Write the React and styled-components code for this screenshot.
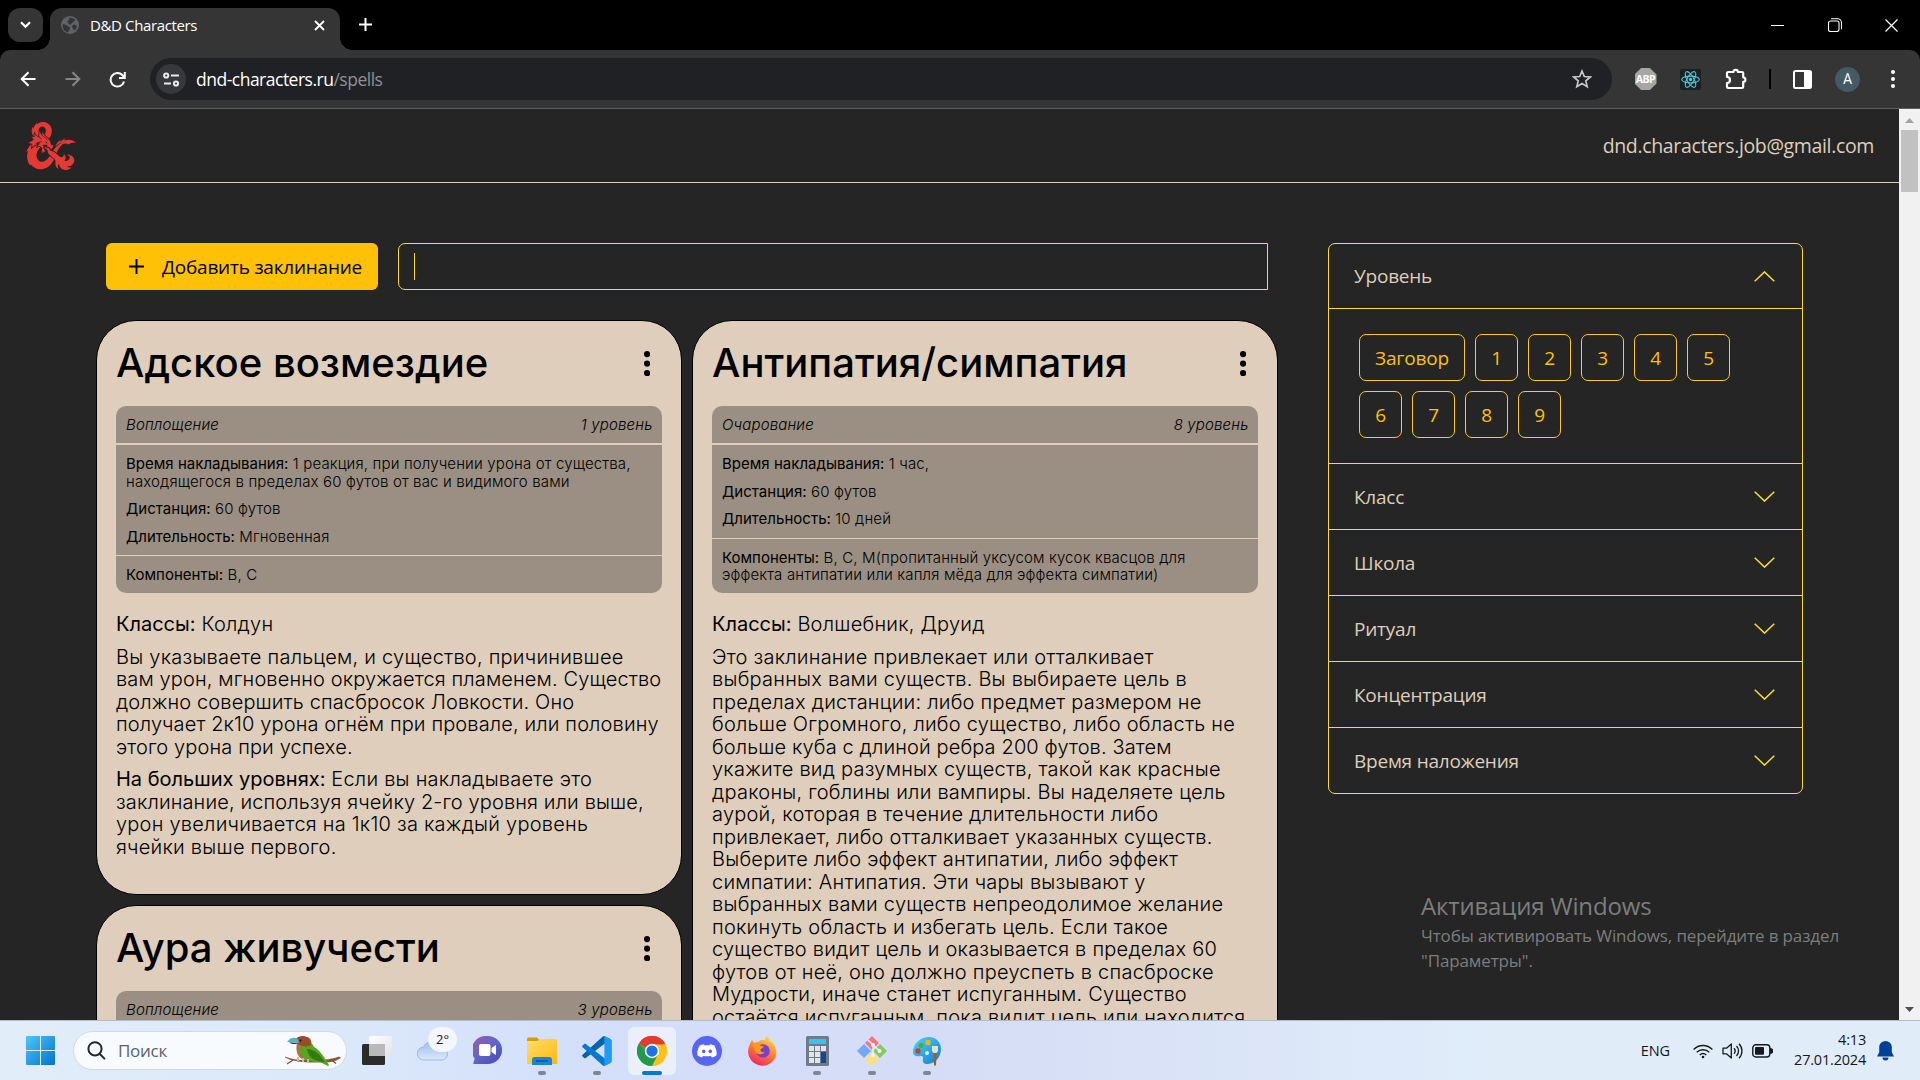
import React from "react";
import styled, { createGlobalStyle, css } from "styled-components";
import { FaDAndD } from "react-icons/fa";

const ui = css`font-family: "Open Sans", "Noto Sans", sans-serif;`;
const inter = css`font-family: Inter, "Liberation Sans", sans-serif;`;

const GlobalStyle = createGlobalStyle`
  * { box-sizing: border-box; }
  body { margin: 0; background: #252525; overflow: hidden; }
  svg { display: block; flex: none; }
`;

const Screen = styled.div`
  width: 1920px;
  height: 1080px;
  display: flex;
  flex-direction: column;
  overflow: hidden;
  background: #000;
  ${ui}
`;

/* ---------- Browser chrome ---------- */

const TabStrip = styled.div`
  height: 50px;
  flex: none;
  display: flex;
  align-items: flex-start;
  background: #000;
  padding: 8px 0 0 8px;
`;

const TabSearch = styled.div`
  width: 35px;
  height: 34px;
  border-radius: 12px;
  background: #353535;
  display: grid;
  place-items: center;
`;

const Tab = styled.div`
  position: relative;
  width: 290px;
  height: 42px;
  margin-left: 7px;
  padding: 0 15px 8px 11px;
  display: flex;
  align-items: center;
  background: #353535;
  border-radius: 12px 12px 0 0;
  &::before,
  &::after {
    content: "";
    position: absolute;
    bottom: 0;
    width: 12px;
    height: 12px;
  }
  &::before {
    left: -12px;
    background: radial-gradient(circle at 0 0, transparent 11.5px, #353535 12px);
  }
  &::after {
    right: -12px;
    background: radial-gradient(circle at 100% 0, transparent 11.5px, #353535 12px);
  }
`;

const TabTitle = styled.span`
  flex: 1;
  margin-left: 11px;
  font-size: 15px;
  letter-spacing: -0.37px;
  color: #fff;
`;

const NewTab = styled.div`
  margin: 9px auto 0 18px;
`;

const WindowButton = styled.div`
  width: 57px;
  height: 34px;
  display: grid;
  place-items: center;
`;

const Toolbar = styled.div`
  height: 58px;
  flex: none;
  display: flex;
  align-items: center;
  padding: 0 5px 0 5px;
  background: #353535;
  border-radius: 10px 10px 0 0;
`;

const ToolSlot = styled.div`
  width: ${(p) => p.$w || 45}px;
  display: flex;
  justify-content: center;
`;

const Omnibox = styled.div`
  flex: 1;
  height: 42px;
  margin: 0 11px 0 10px;
  padding: 0 20px 0 6px;
  display: flex;
  align-items: center;
  border-radius: 21px;
  background: #202124;
`;

const SiteInfo = styled.div`
  width: 30px;
  height: 30px;
  border-radius: 50%;
  background: #37383a;
  display: grid;
  place-items: center;
`;

const Url = styled.div`
  flex: 1;
  margin-left: 10px;
  font-size: 17.5px;
  letter-spacing: -0.5px;
  color: #fff;
  span { color: #8f9093; }
`;

const AdBlock = styled.div`
  width: 22px;
  height: 22px;
  display: grid;
  place-items: center;
  clip-path: polygon(30% 0, 70% 0, 100% 30%, 100% 70%, 70% 100%, 30% 100%, 0 70%, 0 30%);
  background: #a6a6a6;
  color: #fff;
  font: 700 10.5px "Open Sans", sans-serif;
  letter-spacing: -0.5px;
`;

const Divider = styled.div`
  width: 2px;
  height: 20px;
  background: #000;
`;

const Avatar = styled.div`
  width: 25px;
  height: 25px;
  border-radius: 50%;
  background: #455a64;
  color: #fff;
  display: grid;
  place-items: center;
  font: 400 14px Roboto, sans-serif;
`;

/* ---------- Page ---------- */

const Viewport = styled.div`
  height: 912px;
  flex: none;
  display: flex;
  border-top: 1px solid #5f5f5f;
  overflow: hidden;
`;

const Page = styled.div`
  flex: 1;
  height: 911px;
  overflow: hidden;
  background: #252525;
`;

const Scrollbar = styled.div`
  width: 21px;
  display: flex;
  flex-direction: column;
  align-items: center;
  padding: 9px 0 8px;
  background: #f1f1f1;
`;

const Thumb = styled.div`
  width: 17px;
  height: 62px;
  margin: 7px 0 auto;
  background: #c1c1c1;
`;

const SiteHeader = styled.header`
  height: 74px;
  padding: 0 25px 0 24px;
  display: flex;
  align-items: center;
  justify-content: space-between;
  border-bottom: 1px solid #decebb;
`;

const Email = styled.span`
  font-size: 19.5px;
  letter-spacing: -0.35px;
  color: #decebb;
`;

const Main = styled.main`
  display: flex;
  padding: 60px 0 0 96px;
`;

const Spells = styled.section`
  width: 1182px;
`;

const ControlBar = styled.div`
  height: 47px;
  display: flex;
  gap: 20px;
  padding: 0 10px;
  margin-bottom: 30px;
`;

const AddButton = styled.button`
  width: 272px;
  border: 0;
  border-radius: 6px;
  background: #ffc107;
  color: #000;
  padding: 0 0 0 23px;
  display: flex;
  align-items: center;
  gap: 18px;
  white-space: nowrap;
  font-size: 19px;
  letter-spacing: -0.22px;
  ${ui}
`;

const SearchInput = styled.div`
  flex: 1;
  border: 1px solid #fadb3c;
  border-radius: 7px 0 0 7px;
  display: flex;
  align-items: center;
  padding-left: 15px;
`;

const Caret = styled.i`
  width: 1px;
  height: 27px;
  background: #fadb3c;
`;

const Columns = styled.div`
  display: flex;
  align-items: flex-start;
  gap: 10px;
`;

const Column = styled.div`
  flex: 1;
  display: flex;
  flex-direction: column;
  gap: 10px;
`;

const Card = styled.article`
  border: 1px solid #000;
  border-radius: 40px;
  background: #decebb;
  color: #000;
  padding: 19px 19px 37px;
  height: ${(p) => (p.$h ? `${p.$h}px` : "auto")};
  white-space: nowrap;
  ${inter}
`;

const CardHead = styled.div`
  display: flex;
  justify-content: space-between;
  align-items: center;
  height: 45px;
  padding-right: 12px;
  margin-bottom: 21px;
  svg { margin-top: 2px; }
`;

const CardTitle = styled.h2`
  margin: 0;
  font-size: 40px;
  font-weight: 450;
  line-height: 45px;
  letter-spacing: 0.02px;
`;

const Facts = styled.div`
  display: flex;
  flex-direction: column;
  border-radius: 10px;
  overflow: hidden;
  font-size: 15px;
  font-weight: 300;
  line-height: 17.5px;
  letter-spacing: 0.15px;
  b { font-weight: 430; letter-spacing: 0.02px; }
`;

const FactsTop = styled.div`
  height: 37px;
  margin-bottom: 2px;
  padding: 0 9.5px 0 10px;
  display: flex;
  align-items: center;
  justify-content: space-between;
  background: #9a8f82;
  font-style: italic;
`;

const FactsBox = styled.div`
  padding: 10px 10px ${(p) => (p.$last ? 9.5 : 10)}px;
  display: flex;
  flex-direction: column;
  gap: 10px;
  margin-bottom: ${(p) => (p.$last ? 0 : 1)}px;
  background: #9a8f82;
`;

const Prose = styled.div`
  margin-top: 20px;
  display: flex;
  flex-direction: column;
  gap: 10px;
  font-size: 20px;
  font-weight: 300;
  line-height: 22.5px;
  letter-spacing: 0.23px;
  b { font-weight: 430; letter-spacing: 0; }
`;

const Tight = styled.span`
  letter-spacing: 0.125px;
`;

const Aside = styled.aside`
  margin-left: 50px;
`;

const Filters = styled.div`
  width: 475px;
  border: 1px solid #fadb3c;
  border-radius: 7px;
`;

const FilterHead = styled.div`
  height: ${(p) => (p.$first ? 64 : 66)}px;
  padding: 0 27px 0 25px;
  display: flex;
  align-items: center;
  justify-content: space-between;
  border-top: ${(p) => (p.$first ? 0 : 1)}px solid #fadb3c;
  color: #decebb;
  font-size: 19px;
  letter-spacing: -0.22px;
`;

const Chips = styled.div`
  height: 155px;
  border-top: 1px solid #fadb3c;
  padding: 25px 30px;
  display: flex;
  flex-wrap: wrap;
  align-content: flex-start;
  gap: 10px;
`;

const Chip = styled.span`
  min-width: ${(p) => (p.$wide ? 106 : 43)}px;
  height: 47px;
  display: grid;
  place-items: center;
  border: 1px solid #ffc72a;
  border-radius: 7px;
  color: #ffc107;
  font-size: 19px;
  letter-spacing: -0.17px;
`;

const Watermark = styled.div`
  margin: 95px 0 0 93px;
  color: #7d7d7d;
  font-size: 17px;
  line-height: 25px;
  letter-spacing: -0.115px;
  white-space: nowrap;
`;

const WatermarkTitle = styled.div`
  font-size: 24px;
  line-height: 34px;
  letter-spacing: -0.16px;
`;

/* ---------- Taskbar ---------- */

const Taskbar = styled.footer`
  height: 60px;
  flex: none;
  display: flex;
  align-items: center;
  padding: 0 26px 0 26px;
  border-top: 1px solid #b0bcc8;
  background: linear-gradient(90deg, #e1edf8 0%, #dbe8fa 18%, #d4dffa 30%, #d5dcf6 48%, #d9e2f7 60%, #e0edf9 78%, #e0edf9 100%);
`;

const TaskSearch = styled.div`
  width: 274px;
  height: 39px;
  margin: 0 6px 0 18px;
  border-radius: 20px;
  border: 1px solid #cfdae6;
  background: #f8fbfe;
  display: flex;
  align-items: center;
  padding: 0 4px 0 13px;
  color: #5d6165;
  font-size: 17px;
  letter-spacing: -0.27px;
  span { margin: 0 auto 0 12px; }
`;

const AppTile = styled.div`
  position: relative;
  width: 48px;
  height: 48px;
  margin-right: 7px;
  display: grid;
  place-items: center;
  border-radius: 6px;
  background: ${(p) => (p.$active ? "#ebeffa" : "transparent")};
  &::after {
    content: "";
    display: ${(p) => (p.$running || p.$active ? "block" : "none")};
    position: absolute;
    bottom: 0;
    left: 50%;
    transform: translateX(-50%);
    width: ${(p) => (p.$active ? 20 : 8)}px;
    height: 4px;
    border-radius: 2px;
    background: ${(p) => (p.$active ? "#0078d4" : "#7f8595")};
  }
`;

const Temperature = styled.span`
  position: absolute;
  top: 0;
  right: -1px;
  width: 29px;
  height: 25px;
  border-radius: 13px;
  background: #f3f6fb;
  display: grid;
  place-items: center;
  font-size: 13px;
  color: #1b1b1b;
`;

const Tray = styled.div`
  margin-left: auto;
  display: flex;
  align-items: center;
  color: #15181c;
  font-size: 14.500px;
`;

const Lang = styled.span`
  letter-spacing: -0.1px;
`;

const TrayIcons = styled.div`
  display: flex;
  align-items: center;
  gap: 9px;
  margin: 0 21px 0 23px;
`;

const Clock = styled.div`
  width: 72px;
  margin: -2px 11px 0 0;
  text-align: right;
  line-height: 20px;
  white-space: nowrap;
  letter-spacing: -0.2px;
`;

/* ---------- Drawings ---------- */

const Stroke = ({ w = 20, h, vb, d, color = "#fff", sw = 2, cap = "butt", join = "miter" }) => (
  <svg width={w} height={h || w} viewBox={vb || `0 0 ${w} ${h || w}`} fill="none" stroke={color} strokeWidth={sw} strokeLinecap={cap} strokeLinejoin={join}>
    <path d={d} />
  </svg>
);

const Dots = ({ color, r, gap }) => (
  <svg width={r * 2} height={gap * 2 + r * 2} fill={color}>
    {[0, 1, 2].map((i) => <circle key={i} cx={r} cy={r + i * gap} r={r} />)}
  </svg>
);

const Globe = () => (
  <svg width="18" height="18" viewBox="0 0 18 18">
    <circle cx="9" cy="9" r="9" fill="#5f6368" />
    <path d="M2 8c2 0 3 1 4.500 2 1.300.8 2.500.6 2.500 2.500 0 1.500-1.500 2-2 4C4 16 1.500 13 1.700 9.500zM8 2c2-.5 5 .2 6.500 2C13 4.500 13 6 11.500 6.500 10 7 11 8.500 9.500 8.500 8.300 8.500 7 8 7.300 6.500 6 6 6 4.800 7.500 4.400 8.500 4 8.500 3 8 2zM12 9c1.500-.5 3 .3 4 1-.3 2-1.500 4-3 5 0-1.500-.3-2-1.200-2.800-.8-.9-.8-2.700.2-3.200z" fill="#353535" />
  </svg>
);

const Tune = () => (
  <svg width="17" height="15" viewBox="0 0 17 15" fill="none" stroke="#e8eaed" strokeWidth="2">
    <circle cx="3.200" cy="3.500" r="2.100" /><path d="M8 3.500h8M1 11.500h7" /><circle cx="13" cy="11.500" r="2.100" />
  </svg>
);

const ReactBadge = () => (
  <svg width="21" height="21" viewBox="0 0 21 21">
    <rect width="21" height="21" rx="2" fill="#1d1f22" />
    <g fill="none" stroke="#58c4dc" strokeWidth="1.100">
      {[0, 60, 120].map((a) => <ellipse key={a} cx="10.500" cy="10.500" rx="8.800" ry="3.400" transform={`rotate(${a} 10.500 10.500)`} />)}
    </g>
    <circle cx="10.500" cy="10.500" r="1.700" fill="#58c4dc" />
  </svg>
);

const SidePanel = () => (
  <svg width="19" height="19" viewBox="0 0 19 19">
    <rect x="1" y="1" width="17" height="17" rx="1.500" fill="none" stroke="#fff" strokeWidth="2" />
    <path d="M11 1h7v17h-7z" fill="#fff" />
  </svg>
);

const Chevron = ({ up }) => <Stroke w={21} h={11} sw={1.500} color="#fadb3c" d={up ? "M.7 10.200 10.500.9l9.800 9.300" : "M.7.8l9.800 9.300L20.300.8"} />;

const WinLogo = () => (
  <svg width="29" height="29" viewBox="0 0 29 29">
    <defs><linearGradient id="win" x1="0" y1="0" x2="1" y2="1"><stop offset="0" stopColor="#4cc8f8" /><stop offset="1" stopColor="#0670cf" /></linearGradient></defs>
    <path fill="url(#win)" d="M1 0h13v14H0V1a1 1 0 0 1 1-1zM15 0h13a1 1 0 0 1 1 1v13H15zM0 15h14v14H1a1 1 0 0 1-1-1zM15 15h14v13a1 1 0 0 1-1 1H15z" />
  </svg>
);

const Bird = () => (
  <svg width="57" height="30" viewBox="0 0 57 30">
    <path d="M0 20.500c7 3 14 3.500 24 3.500 12 0 20 0 30-3.500l2 1.500c-6 4-12 4.500-20 4.500C22 27 8 26 0 21.500z" fill="#8a5a3c" />
    <path d="M8 24l-6 4M46 23.500l5 4" stroke="#7a4a30" strokeWidth="1.200" />
    <path d="M12 7c-2 8 1 17 9 17l6-2V8z" fill="#b5703f" />
    <path d="M16 9c5-5 11-3 13 2 6 3 10 10 15 18l-1 1-8-4c-8 0-16-1-19-7-2-4-1-7 0-10z" fill="#5aa51f" />
    <path d="M22 13c8 0 14 7 18 13-9 0-17-4-18-13z" fill="#327b13" />
    <path d="M10 4c2-4 8-5 12-3 4 1 5 5 4 8-4 2-9 2-13-1z" fill="#9a4b2a" />
    <path d="M2 6C5 1.500 9 .5 13 3l1 4c-5 0-8-1-12-1z" fill="#58b5c9" />
    <path d="M4 6.500c3 0 6 0 9 1-3 1-6 .8-9-1z" fill="#333" />
    <circle cx="15.500" cy="4.500" r="1" fill="#111" />
    <path d="M13 21v4M18 22v4M23 23v3" stroke="#cbb9a4" strokeWidth="2" />
  </svg>
);

const TaskView = () => (
  <svg width="30" height="29" viewBox="0 0 30 29">
    <defs><linearGradient id="tv" x1="0" y1="0" x2="1" y2="1"><stop offset="0" stopColor="#fff" /><stop offset="1" stopColor="#e3e3e3" /></linearGradient></defs>
    <rect x="0" y="8" width="23" height="21" rx="1.500" fill="#2b2b2b" />
    <rect x="7" y="0" width="23" height="20" rx="1.500" fill="url(#tv)" />
    <path d="M7 8h16v12H8.500A1.500 1.500 0 0 1 7 18.500z" fill="#b9b9b9" />
  </svg>
);

const Cloud = () => (
  <svg width="31" height="21" viewBox="0 0 31 21">
    <defs><linearGradient id="cl" x1="0" y1="0" x2="0" y2="1"><stop offset="0" stopColor="#9dbcf0" /><stop offset="1" stopColor="#dbe9fb" /></linearGradient></defs>
    <path d="M7 20a6.500 6.500 0 0 1-.5-13A9.500 9.500 0 0 1 24 8a6 6 0 0 1 1 12z" fill="url(#cl)" stroke="#86a6dd" strokeWidth=".7" />
  </svg>
);

const Chat = () => (
  <svg width="29" height="29" viewBox="0 0 29 29">
    <defs><linearGradient id="ch" x1="0" y1="0" x2="1" y2="1"><stop offset="0" stopColor="#9a5cb0" /><stop offset=".5" stopColor="#6264c7" /><stop offset="1" stopColor="#4548b5" /></linearGradient></defs>
    <path d="M14.500 0a14.500 14 0 0 1 0 28H1.500c-1.500 0-1.500-1-.8-2l1-3.500A14.500 14 0 0 1 14.500 0z" fill="url(#ch)" />
    <rect x="6" y="8" width="11.500" height="12" rx="2" fill="#fff" /><path d="M18.500 12l4.500-3v10l-4.500-3z" fill="#fff" />
  </svg>
);

const Explorer = () => (
  <svg width="30" height="28" viewBox="0 0 30 28">
    <defs><linearGradient id="fx" x1="0" y1="0" x2="1" y2="1"><stop offset="0" stopColor="#ffdf6e" /><stop offset="1" stopColor="#fbb80f" /></linearGradient></defs>
    <path d="M0 2a1.500 1.500 0 0 1 1.500-1.500H10L13 4H0z" fill="#d99a0b" /><path d="M0 7V4.500h10L13 2h15.500A1.500 1.500 0 0 1 30 3.500V27H0z" fill="url(#fx)" />
    <path d="M5 28v-5a3 3 0 0 1 3-3h14a3 3 0 0 1 3 3v5z" fill="#1a83d6" /><path d="M9 24h12" stroke="#0a4f96" strokeWidth="1.500" />
  </svg>
);

const VsCode = () => (
  <svg width="30" height="30" viewBox="0 0 100 100">
    <path d="M96 11 75.500 1a6 6 0 0 0-7 1.200L2 62.500a4 4 0 0 0 0 6l5.500 5a4 4 0 0 0 5 .2L93 12.500z" fill="#0065a9" />
    <path d="M96 89 75.500 99a6 6 0 0 1-7-1.200L2 37.500a4 4 0 0 1 0-6l5.500-5a4 4 0 0 1 5-.2L93 87.500z" fill="#007acc" />
    <path d="M75.500 99a6 6 0 0 1-7-1.200c2.200 2.300 6.200.7 6.200-2.600V4.800c0-3.300-4-4.900-6.200-2.600a6 6 0 0 1 7-1.200l20.600 9.900a6 6 0 0 1 3.400 5.600v67a6 6 0 0 1-3.400 5.600z" fill="#1f9cf0" />
  </svg>
);

const Chrome = () => (
  <svg width="30" height="30" viewBox="0 0 48 48">
    <path d="M24 24 3.200 12A24 24 0 0 1 44.800 12z" fill="#ea4335" /><path d="M24 24 44.800 12A24 24 0 0 1 24 48z" fill="#fbbc04" /><path d="M24 24v24A24 24 0 0 1 3.200 12z" fill="#34a853" />
    <path d="M24 13h21.300A24 24 0 0 1 24 48l9.500-18.500z" fill="#fbc116" /><path d="M3.200 12A24 24 0 0 1 45.300 13H24a11 11 0 0 0-9.500 5.500z" fill="#e33b2e" /><path d="M3.200 12l11.300 17.500A11 11 0 0 0 33.500 29.500L24 48A24 24 0 0 1 3.200 12z" fill="#229a4b" />
    <circle cx="24" cy="24" r="11.500" fill="#fff" /><circle cx="24" cy="24" r="9" fill="#1a73e8" />
  </svg>
);

const Discord = () => (
  <svg width="30" height="30" viewBox="0 0 30 30">
    <circle cx="15" cy="15" r="15" fill="#5865f2" />
    <path d="M12 8.200c-1.600.2-3.100.7-4.300 1.300C5.900 12.400 5.100 15.500 5.400 19.300c1.500 1.200 3 1.900 4.600 2.300l1.100-1.700c2.600.6 5.200.6 7.800 0l1.100 1.700c1.600-.4 3.100-1.100 4.600-2.300.3-3.800-.5-6.900-2.300-9.800-1.200-.6-2.700-1.100-4.300-1.300l-.6 1.200c-1.600-.2-3.200-.2-4.800 0z" fill="#fff" />
    <circle cx="11.700" cy="15.400" r="1.800" fill="#5865f2" /><circle cx="18.300" cy="15.400" r="1.800" fill="#5865f2" />
  </svg>
);

const Firefox = () => (
  <svg width="29" height="30" viewBox="0 0 29 30">
    <defs><linearGradient id="ff" x1=".8" y1="0" x2=".3" y2="1"><stop offset="0" stopColor="#ffe14a" /><stop offset=".45" stopColor="#ff8a2a" /><stop offset="1" stopColor="#ee2462" /></linearGradient></defs>
    <path d="M19 0c2 2 2 4 4 6 1.500 0 2 1 2.500 2 4 6 3.500 12 .5 16A14.500 14.500 0 0 1 0 16C0 11 2 8 4 4l2 3c2-1 3-1 4-1 2-2 4-2 5-2 1 0 2 .5 2-.5 0-1.500 1-2.500 2-3.500z" fill="url(#ff)" />
    <circle cx="15" cy="15" r="6.800" fill="#7a3fd0" />
    <path d="M4 9c3-2 7-1 9 1l3 .5c0 1-3 1.800-3.500 3-.3 2 1.500 3 4 2.500-2 3-7 3-9 0C7 14 5 11 4 9z" fill="#ff9a1f" />
  </svg>
);

const Calculator = () => (
  <svg width="23" height="30" viewBox="0 0 23 30">
    <rect width="23" height="30" rx="1.500" fill="#6f7b86" /><rect x="3" y="3" width="17" height="5" fill="#33c7ee" />
    {[0, 1, 2].map((r) => [0, 1, 2].map((c) => <rect key={`${r}${c}`} x={3 + c * 6} y={10 + r * 6} width="5" height="5" fill={c === 2 && r ? "#0f4a94" : "#e2e5e8"} />))}
    <path d="M15 16h5v11h-5z" fill="#0f4a94" />
  </svg>
);

const Git = () => (
  <svg width="30" height="30" viewBox="0 0 30 30">
    <path d="M15 0l7 7-7 7-7-7z" fill="#f2767c" /><path d="M23 8l7 7-7 7-7-7z" fill="#86c95f" /><path d="M7 8l7 7-7 7-7-7z" fill="#74a7f5" /><path d="M15 16l7 7-7 7-7-7z" fill="#ffdf7c" />
    <path d="M11 4l8 8M16 9v11M17 10l6 5" stroke="#eef1fb" strokeWidth="1.500" /><circle cx="16" cy="9" r="2" fill="#eef1fb" /><circle cx="16" cy="19.500" r="2" fill="#eef1fb" /><circle cx="22.500" cy="15" r="2" fill="#eef1fb" />
  </svg>
);

const Paint = () => (
  <svg width="29" height="30" viewBox="0 0 29 30">
    <defs><linearGradient id="pt" x1="0" y1="0" x2="1" y2="1"><stop offset="0" stopColor="#4fd3f5" /><stop offset="1" stopColor="#0f7fd0" /></linearGradient></defs>
    <path d="M16 1c7 0 12 5 12 12 0 9-7 15-14 15-3 0-5-2-4-5 .7-2-.5-3.500-2.500-3C4 21 0 20 0 16 0 7 8 1 16 1z" fill="url(#pt)" />
    <circle cx="5" cy="15" r="2.700" fill="#c0452a" /><circle cx="8" cy="9.500" r="2.500" fill="#46b135" /><circle cx="15" cy="6.500" r="2.700" fill="#f0b51d" /><circle cx="14" cy="17" r="2" fill="#d8f1fb" />
    <path d="M19 10h6v5l-1.500 2h-3L19 15z" fill="#e9dfc6" /><path d="M20.500 17h3L23 29.500h-2z" fill="#a55c1e" />
  </svg>
);

const Wifi = () => (
  <svg width="20" height="16" viewBox="0 0 20 16" fill="none" stroke="#15181c" strokeWidth="1.300">
    <path d="M.6 6.500a13 13 0 0 1 18.800 0M3.700 9.300a9 9 0 0 1 12.600 0M6.700 11.900a5 5 0 0 1 6.600 0" /><circle cx="10" cy="14" r="1.300" fill="#15181c" stroke="none" />
  </svg>
);

const Volume = () => (
  <svg width="21" height="18" viewBox="0 0 21 18" fill="none" stroke="#15181c" strokeWidth="1.300" strokeLinejoin="round">
    <path d="M1 6.200h3.500L9.300 2v14l-4.800-4.200H1zM12 6.300a4 4 0 0 1 0 5.400M14.500 4a7.200 7.200 0 0 1 0 10M17 1.700a10.500 10.500 0 0 1 0 14.600" />
  </svg>
);

const Battery = () => (
  <svg width="21" height="14" viewBox="0 0 21 14">
    <rect x=".8" y=".8" width="17" height="12.200" rx="3" fill="none" stroke="#15181c" strokeWidth="1.400" /><rect x="3" y="3" width="9" height="7.800" rx="1" fill="#15181c" /><path d="M18.500 4.500a2 2 0 0 1 0 5z" fill="#15181c" stroke="#15181c" />
  </svg>
);

const Bell = () => (
  <svg width="17" height="20" viewBox="0 0 17 20" fill="#00409a">
    <path d="M8.500 0a6.300 6.300 0 0 1 6.300 6.300v5L17 15.500H0l2.200-4.200v-5A6.300 6.300 0 0 1 8.500 0zM5.500 16.500h6a3 3 0 0 1-6 0z" />
  </svg>
);

/* ---------- Content ---------- */

const Lines = ({ items }) => items.map((line, i) => (
  <React.Fragment key={i}>{i > 0 && <br />}{line}</React.Fragment>
));

const hellish = {
  title: "Адское возмездие",
  school: "Воплощение",
  level: "1 уровень",
  facts: [
    ["Время накладывания:", ["1 реакция, при получении урона от существа,", "находящегося в пределах 60 футов от вас и видимого вами"]],
    ["Дистанция:", ["60 футов"]],
    ["Длительность:", ["Мгновенная"]],
  ],
  components: ["В, С"],
  prose: [
    ["Классы:", ["Колдун"]],
    [null, [
      "Вы указываете пальцем, и существо, причинившее",
      <Tight>вам урон, мгновенно окружается пламенем. Существо</Tight>,
      <Tight>должно совершить спасбросок Ловкости. Оно</Tight>,
      <Tight>получает 2к10 урона огнём при провале, или половину</Tight>,
      <Tight>этого урона при успехе.</Tight>,
    ]],
    ["На больших уровнях:", [
      "Если вы накладываете это",
      <Tight>заклинание, используя ячейку 2-го уровня или выше,</Tight>,
      "урон увеличивается на 1к10 за каждый уровень",
      "ячейки выше первого.",
    ]],
  ],
};

const vitality = {
  title: "Аура живучести",
  school: "Воплощение",
  level: "3 уровень",
  facts: [],
  components: null,
  prose: [],
};

const antipathy = {
  title: "Антипатия/симпатия",
  school: "Очарование",
  level: "8 уровень",
  facts: [
    ["Время накладывания:", ["1 час,"]],
    ["Дистанция:", ["60 футов"]],
    ["Длительность:", ["10 дней"]],
  ],
  components: ["В, С, М(пропитанный уксусом кусок квасцов для", "эффекта антипатии или капля мёда для эффекта симпатии)"],
  prose: [
    ["Классы:", ["Волшебник, Друид"]],
    [null, [
      "Это заклинание привлекает или отталкивает",
      "выбранных вами существ. Вы выбираете цель в",
      "пределах дистанции: либо предмет размером не",
      "больше Огромного, либо существо, либо область не",
      <Tight>больше куба с длиной ребра 200 футов. Затем</Tight>,
      "укажите вид разумных существ, такой как красные",
      "драконы, гоблины или вампиры. Вы наделяете цель",
      "аурой, которая в течение длительности либо",
      "привлекает, либо отталкивает указанных существ.",
      "Выберите либо эффект антипатии, либо эффект",
      "симпатии: Антипатия. Эти чары вызывают у",
      "выбранных вами существ непреодолимое желание",
      "покинуть область и избегать цель. Если такое",
      "существо видит цель и оказывается в пределах 60",
      "футов от неё, оно должно преуспеть в спасброске",
      "Мудрости, иначе станет испуганным. Существо",
      "остаётся испуганным, пока видит цель или находится",
    ]],
  ],
};

const SpellCard = ({ spell, height }) => (
  <Card $h={height}>
    <CardHead>
      <CardTitle>{spell.title}</CardTitle>
      <Dots color="#000" r={3.100} gap={9.500} />
    </CardHead>
    <Facts>
      <FactsTop><span>{spell.school}</span><span>{spell.level}</span></FactsTop>
      {spell.facts.length > 0 && (
        <FactsBox>
          {spell.facts.map(([name, lines]) => <div key={name}><b>{name}</b> <Lines items={lines} /></div>)}
        </FactsBox>
      )}
      {spell.components && <FactsBox $last><div><b>Компоненты:</b> <Lines items={spell.components} /></div></FactsBox>}
    </Facts>
    {spell.prose.length > 0 && (
      <Prose>
        {spell.prose.map(([name, lines], i) => <div key={i}>{name && <><b>{name}</b> </>}<Lines items={lines} /></div>)}
      </Prose>
    )}
  </Card>
);

const levels = ["Заговор", "1", "2", "3", "4", "5", "6", "7", "8", "9"];
const filters = ["Класс", "Школа", "Ритуал", "Концентрация", "Время наложения"];

export default function App() {
  return (
    <Screen>
      <GlobalStyle />
      <TabStrip>
        <TabSearch><Stroke w={11} h={8} sw={2.200} d="M1 1.200l4.500 4.600L10 1.200" /></TabSearch>
        <Tab>
          <Globe />
          <TabTitle>D&amp;D Characters</TabTitle>
          <Stroke w={11} sw={1.800} d="M1 1l9 9M10 1l-9 9" />
        </Tab>
        <NewTab><Stroke w={15} sw={2} d="M7.500 1v13M1 7.500h13" /></NewTab>
        <WindowButton><Stroke w={13} sw={1} d="M0 6.500h13" /></WindowButton>
        <WindowButton><Stroke w={14} sw={1.100} d="M2.500 3h6.500a2 2 0 0 1 2 2v6.500a2 2 0 0 1-2 2H2.500a2 2 0 0 1-2-2V5a2 2 0 0 1 2-2zM3 .8h6.500a4 4 0 0 1 4 4v6.500" /></WindowButton>
        <WindowButton><Stroke w={13} sw={1.200} d="M.5.5l12 12M12.500.5l-12 12" /></WindowButton>
      </TabStrip>
      <Toolbar>
        <ToolSlot><Stroke w={16} d="M15.500 8H1.800M8.500 1.200L1.700 8l6.800 6.800" /></ToolSlot>
        <ToolSlot><Stroke w={16} color="#878787" d="M.5 8h13.700M7.500 1.200L14.300 8l-6.800 6.800" /></ToolSlot>
        <ToolSlot><Stroke w={17} d="M15 10.500A6.800 6.800 0 1 1 13.300 4L15 5.800M15.800 1v6H10" /></ToolSlot>
        <Omnibox>
          <SiteInfo><Tune /></SiteInfo>
          <Url>dnd-characters.ru<span>/spells</span></Url>
          <Stroke w={20} sw={1.700} color="#c4c7c5" d="M10 2l2.300 5.500 6 .5-4.500 3.900 1.400 5.800L10 14.600l-5.200 3.100 1.400-5.800L1.700 8l6-.5z" />
        </Omnibox>
        <ToolSlot><AdBlock>ABP</AdBlock></ToolSlot>
        <ToolSlot><ReactBadge /></ToolSlot>
        <ToolSlot $w={46}><Stroke w={22} sw={2.200} join="round" d="M3 4h5.500a2.200 2.200 0 0 1 4.400 0H17a1.200 1.200 0 0 1 1.200 1.200V9.500a2.200 2.200 0 0 1 0 4.400v4.900A1.200 1.200 0 0 1 17 20H3.200A1.200 1.200 0 0 1 2 18.800V15a3 3 0 0 0 0-6V5.200A1.200 1.200 0 0 1 3.200 4z" /></ToolSlot>
        <ToolSlot $w={21}><Divider /></ToolSlot>
        <ToolSlot><SidePanel /></ToolSlot>
        <ToolSlot><Avatar>A</Avatar></ToolSlot>
        <ToolSlot><Dots color="#fff" r={2} gap={7} /></ToolSlot>
      </Toolbar>

      <Viewport>
        <Page>
          <SiteHeader>
            <FaDAndD size={54} color="#e53935" />
            <Email>dnd.characters.job@gmail.com</Email>
          </SiteHeader>
          <Main>
            <Spells>
              <ControlBar>
                <AddButton><Stroke w={15} color="#000" sw={1.900} d="M7.500 0v15M0 7.500h15" />Добавить заклинание</AddButton>
                <SearchInput><Caret /></SearchInput>
              </ControlBar>
              <Columns>
                <Column>
                  <SpellCard spell={hellish} height={575} />
                  <SpellCard spell={vitality} height={400} />
                </Column>
                <Column><SpellCard spell={antipathy} /></Column>
              </Columns>
            </Spells>
            <Aside>
              <Filters>
                <FilterHead $first>Уровень<Chevron up /></FilterHead>
                <Chips>{levels.map((l) => <Chip key={l} $wide={l.length > 1}>{l}</Chip>)}</Chips>
                {filters.map((name) => <FilterHead key={name}>{name}<Chevron /></FilterHead>)}
              </Filters>
              <Watermark>
                <WatermarkTitle>Активация Windows</WatermarkTitle>
                Чтобы активировать Windows, перейдите в раздел<br />"Параметры".
              </Watermark>
            </Aside>
          </Main>
        </Page>
        <Scrollbar>
          <svg width="9" height="5"><path d="M0 5L4.500 0 9 5z" fill="#a3a3a3" /></svg>
          <Thumb />
          <svg width="9" height="5"><path d="M0 0l4.500 5L9 0z" fill="#505050" /></svg>
        </Scrollbar>
      </Viewport>

      <Taskbar>
        <WinLogo />
        <TaskSearch>
          <Stroke w={19} sw={2} color="#24272b" cap="round" d="M8 1.200a6.600 6.600 0 1 1 0 13.200A6.600 6.600 0 0 1 8 1.200zM12.600 12.800l4.800 4.800" />
          <span>Поиск</span>
          <Bird />
        </TaskSearch>
        <AppTile><TaskView /></AppTile>
        <AppTile><Cloud /><Temperature>2°</Temperature></AppTile>
        <AppTile><Chat /></AppTile>
        <AppTile $running><Explorer /></AppTile>
        <AppTile $running><VsCode /></AppTile>
        <AppTile $active><Chrome /></AppTile>
        <AppTile><Discord /></AppTile>
        <AppTile><Firefox /></AppTile>
        <AppTile $running><Calculator /></AppTile>
        <AppTile $running><Git /></AppTile>
        <AppTile $running><Paint /></AppTile>
        <Tray>
          <Lang>ENG</Lang>
          <TrayIcons><Wifi /><Volume /><Battery /></TrayIcons>
          <Clock>4:13<br />27.01.2024</Clock>
          <Bell />
        </Tray>
      </Taskbar>
    </Screen>
  );
}
